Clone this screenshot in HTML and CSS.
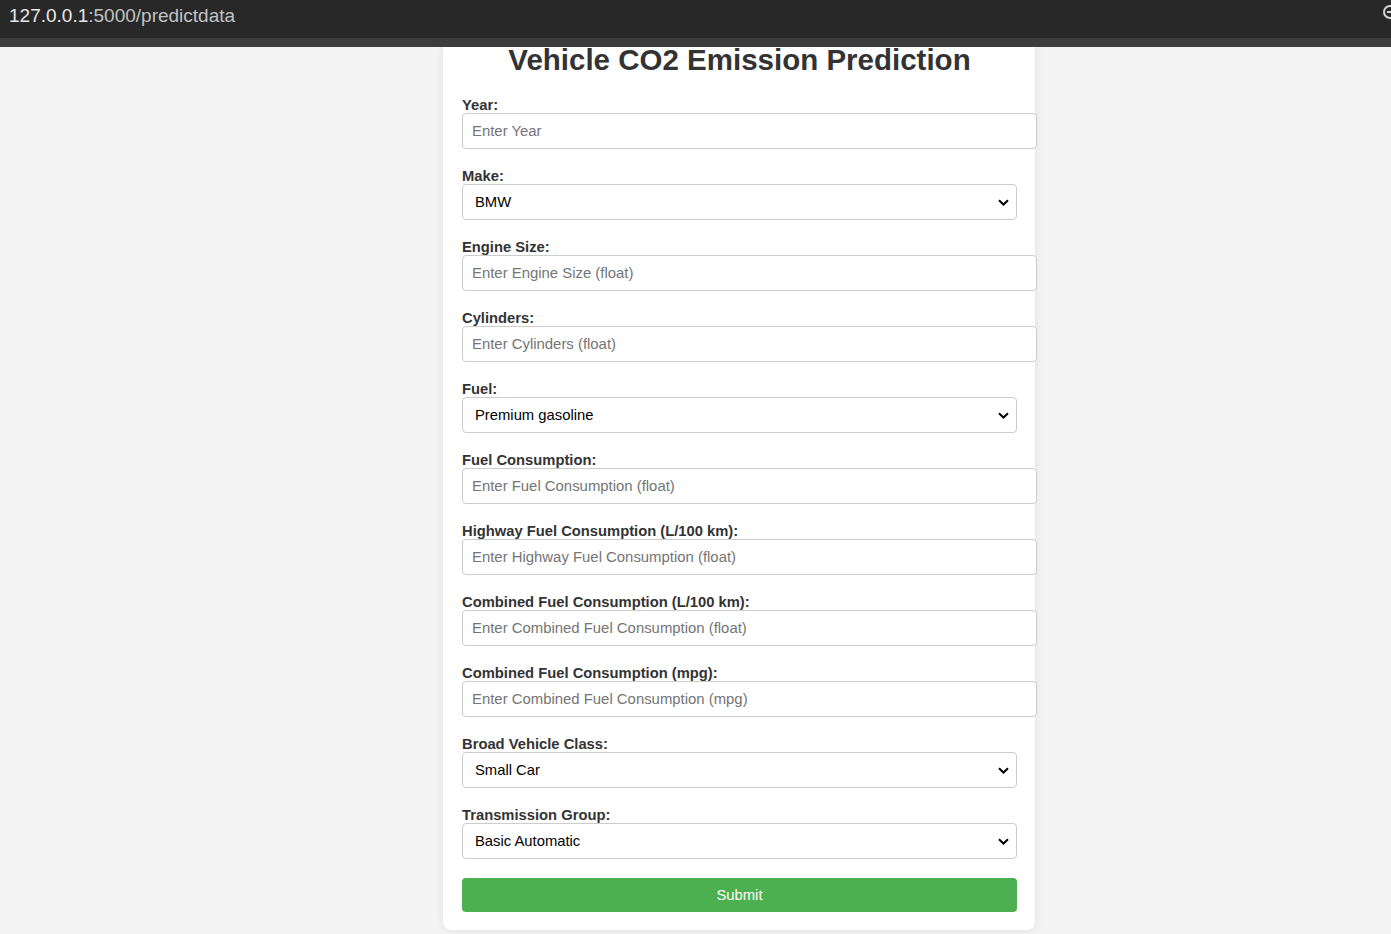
FILE: index.html
```html
<!DOCTYPE html>
<html lang="en">
<head>
<meta charset="utf-8">
<title>Vehicle CO2 Emission Prediction</title>
<link rel="stylesheet" href="styles.css">
</head>
<body>
<header class="urlbar">
  <div class="url"><span class="host">127.0.0.1</span><span class="path">:5000/predictdata</span></div>
  <svg class="zoom-icon" width="16" height="16" viewBox="0 0 16 16" aria-hidden="true">
    <circle cx="8" cy="8" r="6" fill="none" stroke="#d6d6d6" stroke-width="2"/>
    <line x1="5" y1="8" x2="11" y2="8" stroke="#d6d6d6" stroke-width="2"/>
  </svg>
</header>
<div class="strip"></div>
<main class="viewport">
  <div class="card">
    <h1 class="title">Vehicle CO2 Emission Prediction</h1>
    <form class="form">
      <label class="label" for="year">Year:</label>
      <input class="field" id="year" type="text" placeholder="Enter Year">

      <label class="label" for="make">Make:</label>
      <select class="choice" id="make"><option>BMW</option></select>

      <label class="label" for="engine">Engine Size:</label>
      <input class="field" id="engine" type="text" placeholder="Enter Engine Size (float)">

      <label class="label" for="cyl">Cylinders:</label>
      <input class="field" id="cyl" type="text" placeholder="Enter Cylinders (float)">

      <label class="label" for="fuel">Fuel:</label>
      <select class="choice" id="fuel"><option>Premium gasoline</option></select>

      <label class="label" for="fc">Fuel Consumption:</label>
      <input class="field" id="fc" type="text" placeholder="Enter Fuel Consumption (float)">

      <label class="label" for="hwy">Highway Fuel Consumption (L/100 km):</label>
      <input class="field" id="hwy" type="text" placeholder="Enter Highway Fuel Consumption (float)">

      <label class="label" for="comb">Combined Fuel Consumption (L/100 km):</label>
      <input class="field" id="comb" type="text" placeholder="Enter Combined Fuel Consumption (float)">

      <label class="label" for="mpg">Combined Fuel Consumption (mpg):</label>
      <input class="field" id="mpg" type="text" placeholder="Enter Combined Fuel Consumption (mpg)">

      <label class="label" for="cls">Broad Vehicle Class:</label>
      <select class="choice" id="cls"><option>Small Car</option></select>

      <label class="label" for="trans">Transmission Group:</label>
      <select class="choice" id="trans"><option>Basic Automatic</option></select>

      <button class="submit" type="button">Submit</button>
    </form>
  </div>
</main>
</body>
</html>
```

FILE: styles.css
```css
html, body {
  margin: 0;
  padding: 0;
}

body {
  background: #f4f4f4;
  font-family: "Liberation Sans", Arial, sans-serif;
  height: 934px;
  overflow: hidden;
}

.urlbar {
  height: 38px;
  background: #282828;
  display: flex;
  align-items: center;
  justify-content: space-between;
  overflow: hidden;
}

.url {
  padding-left: 9px;
  font-size: 19px;
  line-height: 22px;
  margin-top: -6px;
  font-family: "Liberation Sans", Arial, sans-serif;
}

.host {
  color: #e8e8e8;
}

.path {
  color: #c2c2c2;
}

.zoom-icon {
  margin-right: -7px;
  margin-top: -14px;
}

.strip {
  height: 9px;
  background: #3c3c3c;
}

.viewport {
  height: 887px;
  overflow: hidden;
}

.card {
  width: 555px;
  margin-left: 443px;
  padding: 0 18px 18px 19px;
  background: #ffffff;
  border-radius: 0 0 8px 8px;
  box-shadow: 0 0 10px rgba(0, 0, 0, 0.1);
}

.title {
  margin: 0 0 22px 0;
  font-size: 29.5px;
  line-height: 26px;
  font-weight: bold;
  color: #333;
  text-align: center;
}

.form {
  display: flex;
  flex-direction: column;
  align-items: flex-start;
}

.label {
  display: block;
  font-size: 14.75px;
  line-height: 16px;
  padding-top: 2px;
  font-weight: bold;
  color: #333;
}

.field {
  display: block;
  width: 554px;
  box-sizing: content-box;
  padding: 8px 10px 8px 9px;
  margin: 0 0 17px 0;
  border: 1px solid #ccc;
  border-radius: 4px;
  font-family: "Liberation Sans", Arial, sans-serif;
  font-size: 14.9px;
  line-height: 18px;
  height: 18px;
  color: #000;
  background: #fff;
  outline: none;
}

.field::placeholder {
  color: #757575;
}

.choice {
  display: block;
  width: 555px;
  height: 36px;
  box-sizing: border-box;
  padding: 0 30px 0 12px;
  margin: 0 0 17px 0;
  border: 1px solid #ccc;
  border-radius: 4px;
  font-family: "Liberation Sans", Arial, sans-serif;
  font-size: 14.8px;
  color: #000;
  -webkit-appearance: none;
  appearance: none;
  background-color: #fff;
  background-image: url("data:image/svg+xml,%3Csvg xmlns='http://www.w3.org/2000/svg' width='11' height='7' viewBox='0 0 11 7'%3E%3Cpath d='M1 1.2l4.5 4.3 4.5-4.3' fill='none' stroke='%23000' stroke-width='2'/%3E%3C/svg%3E");
  background-repeat: no-repeat;
  background-position: right 7px center;
  background-size: 11px 7px;
}

.submit {
  display: block;
  width: 555px;
  height: 34px;
  margin-top: 2px;
  border: none;
  border-radius: 4px;
  background: #4caf50;
  color: #fff;
  font-family: "Liberation Sans", Arial, sans-serif;
  font-size: 14.8px;
  cursor: pointer;
}
```
